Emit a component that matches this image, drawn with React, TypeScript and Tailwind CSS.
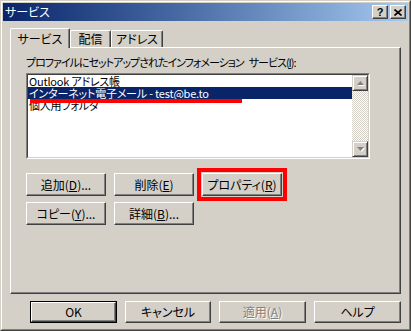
import type { ReactNode } from "react";

const font = "font-['Noto_Sans_CJK_JP','Noto_Sans_CJK_SC',sans-serif] [font-feature-settings:'palt']";

function U({ children }: { children: ReactNode }) {
  return <span className="underline underline-offset-[1px]">{children}</span>;
}

function Btn({
  children,
  w,
  h = 23,
  def,
  disabled,
}: {
  children: ReactNode;
  w: string;
  h?: number;
  def?: boolean;
  disabled?: boolean;
}) {
  const face = (
    <div className="flex h-full w-full items-center justify-center border border-t-white border-l-white border-r-[#404040] border-b-[#404040] bg-[#d4d0c8] shadow-[inset_-1px_-1px_#808080]">
      <span
        className={
          disabled
            ? "text-[#808080] [text-shadow:1px_1px_0_#ffffff]"
            : "text-black"
        }
      >
        {children}
      </span>
    </div>
  );
  return (
    <div className={`${w} ${h === 23 ? "h-[23px]" : "h-[22px]"} shrink-0`}>
      {def ? <div className="h-full w-full border border-black">{face}</div> : face}
    </div>
  );
}

function Arrow({ up }: { up?: boolean }) {
  return (
    <div className="flex h-[16px] w-[16px] items-center justify-center border border-t-[#d4d0c8] border-l-[#d4d0c8] border-r-[#404040] border-b-[#404040] bg-[#d4d0c8] shadow-[inset_1px_1px_#ffffff,inset_-1px_-1px_#808080]">
      <svg width="7" height="5" viewBox="0 0 7 5" className="overflow-visible">
        {up ? (
          <>
            <polygon points="4.5,1 8,5 1,5" fill="#ffffff" />
            <polygon points="3.5,0 7,4 0,4" fill="#808080" />
          </>
        ) : (
          <>
            <polygon points="1,1 8,1 4.5,5" fill="#ffffff" />
            <polygon points="0,0 7,0 3.5,4" fill="#808080" />
          </>
        )}
      </svg>
    </div>
  );
}

function CapBtn({ children }: { children: ReactNode }) {
  return (
    <div className="flex h-[14px] w-[16px] items-center justify-center border border-t-white border-l-white border-r-[#404040] border-b-[#404040] bg-[#d4d0c8] shadow-[inset_-1px_-1px_#808080]">
      {children}
    </div>
  );
}

export default function App() {
  return (
    <div className={`${font} h-[331px] w-[411px] text-[12px] leading-[12px] text-black`}>
      <div className="h-full w-full border border-t-[#d4d0c8] border-l-[#d4d0c8] border-r-[#404040] border-b-[#404040]">
        <div className="flex h-full w-full flex-col border border-t-white border-l-white border-r-[#808080] border-b-[#808080] bg-[#d4d0c8] p-px">
          {/* title bar */}
          <div className="flex h-[18px] shrink-0 items-center bg-gradient-to-r from-[#0a246a] to-[#a6caf0] pl-[2px] pr-[2px]">
            <span className="text-[12px] text-white">サービス</span>
            <div className="ml-auto flex gap-[2px]">
              <CapBtn>
                <span className="font-['Liberation_Sans',sans-serif] text-[11px] font-bold leading-[11px]">?</span>
              </CapBtn>
              <CapBtn>
                <svg width="8" height="7" viewBox="0 0 8 7">
                  <path d="M0.5 0.5 L7.5 6.5 M7.5 0.5 L0.5 6.5" stroke="#000" strokeWidth="1.6" />
                </svg>
              </CapBtn>
            </div>
          </div>

          <div className="flex flex-1 flex-col px-[7px] pt-[7px]">
            {/* tabs */}
            <div className="flex h-[19px] items-end">
              <div className="relative z-10 -mb-px flex h-[20px] w-[60px] items-center justify-center rounded-tl-[2px] rounded-tr-[2px] border-t border-l border-r border-t-white border-l-white border-r-[#404040] bg-[#d4d0c8] shadow-[inset_-1px_0_#808080]">
                サービス
              </div>
              <div className="flex h-[17px] w-[41px] items-center justify-center rounded-tl-[2px] rounded-tr-[2px] border-t border-l border-r border-t-white border-l-white border-r-[#404040] shadow-[inset_-1px_0_#808080]">
                配信
              </div>
              <div className="flex h-[17px] w-[52px] items-center justify-center rounded-tl-[2px] rounded-tr-[2px] border-t border-l border-r border-t-white border-l-white border-r-[#404040] shadow-[inset_-1px_0_#808080]">
                アドレス
              </div>
            </div>

            {/* panel */}
            <div className="h-[247px] border border-t-white border-l-white border-r-[#404040] border-b-[#404040] pl-[15px] pt-[8px] shadow-[inset_-1px_-1px_#808080]">
              <div className="h-[12px] text-[11px] tracking-[-1px]">
                プロファイルにセットアップされたインフォメーション<span className="inline-block w-[5px]" />サービス(<U>I</U>):
              </div>

              <div className="relative mt-[5px] h-[86px] w-[344px] border border-t-[#808080] border-l-[#808080] border-r-white border-b-white">
                <div className="flex h-full w-full border border-t-[#404040] border-l-[#404040] border-r-[#d4d0c8] border-b-[#d4d0c8] bg-white">
                  <div className="flex-1 text-[11px] leading-[12px] tracking-[-0.2px]">
                    <div className="h-[12px] pl-px">Outlook アドレス帳</div>
                    <div className="h-[12px] bg-[#0a246a] pl-px text-white">
                      インターネット電子メール - test@be.to
                    </div>
                    <div className="h-[12px] pl-px">個人用フォルダ</div>
                  </div>
                  <div className="flex w-[16px] flex-col">
                    <Arrow up />
                    <div className="flex-1 bg-[repeating-conic-gradient(#d4d0c8_0_25%,#ffffff_0_50%)] bg-[length:2px_2px]" />
                    <Arrow />
                  </div>
                </div>
                <div className="absolute left-[3px] top-[25px] h-[4px] w-[212px] bg-[#ff0000]" />
              </div>

              <div className="mt-[14px] flex flex-col gap-[6px]">
                <div className="flex gap-[8px]">
                  <Btn w="w-[80px]">
                    追加(<U>D</U>)...
                  </Btn>
                  <Btn w="w-[80px]">
                    削除(<U>E</U>)
                  </Btn>
                  <div className="relative">
                    <Btn w="w-[80px]">
                      プロパティ(<U>R</U>)
                    </Btn>
                    <div className="absolute -inset-[5px] border-4 border-[#ff0000]" />
                  </div>
                </div>
                <div className="flex gap-[8px]">
                  <Btn w="w-[80px]">
                    コピー(<U>Y</U>)...
                  </Btn>
                  <Btn w="w-[80px]">
                    詳細(<U>B</U>)...
                  </Btn>
                </div>
              </div>
            </div>

            {/* bottom buttons */}
            <div className="mt-[7px] flex justify-end gap-[8px]">
              <Btn w="w-[87px]" h={22} def>
                OK
              </Btn>
              <Btn w="w-[86px]" h={22}>
                キャンセル
              </Btn>
              <Btn w="w-[87px]" h={22} disabled>
                適用(<U>A</U>)
              </Btn>
              <Btn w="w-[87px]" h={22}>
                ヘルプ
              </Btn>
            </div>
          </div>
        </div>
      </div>
    </div>
  );
}
